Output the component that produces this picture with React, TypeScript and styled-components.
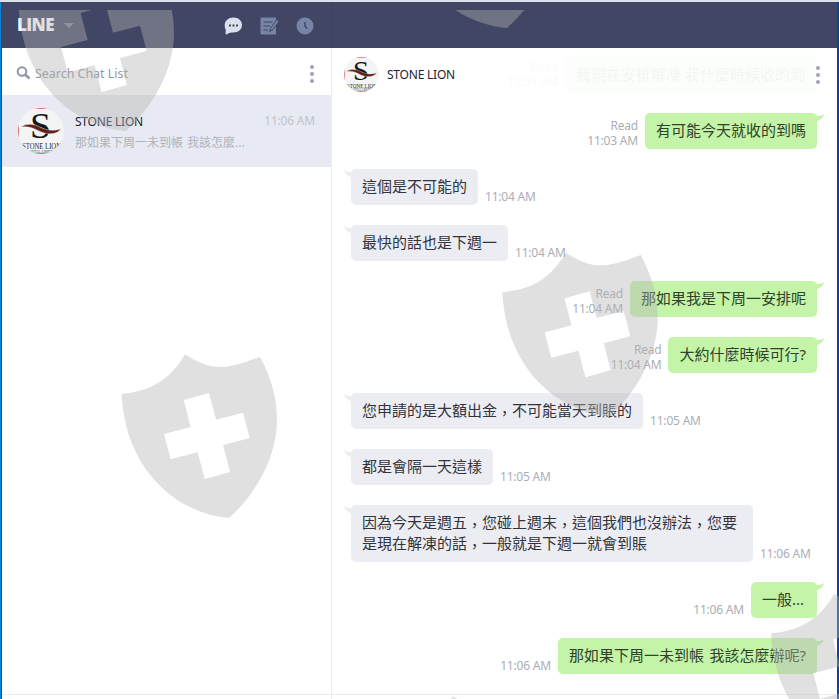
import React from "react";
import styled, { createGlobalStyle } from "styled-components";

const Global = createGlobalStyle`
  * { box-sizing: border-box; }
  html, body, #root { margin: 0; height: 100%; }
  body { overflow: hidden; background: #fff; font-family: "Noto Sans", "Noto Sans CJK TC", sans-serif; }
`;

const Desktop = styled.div`
  position: relative;
  width: 839px;
  height: 699px;
  overflow: hidden;
  display: flex;
  flex-direction: column;
  border-top: 2px solid #dbe2ec;
`;
const Main = styled.div`
  flex: 1;
  min-height: 0;
  display: grid;
  grid-template-columns: 1px 1px 330px 505px 2px;
`;
const Edge = styled.div<{ $color: string }>`
  background: ${(p) => p.$color};
`;
const Sidebar = styled.aside`
  display: flex;
  flex-direction: column;
  border-right: 1px solid #ebecef;
  background: #fff;
`;
const SideBar = styled.header`
  height: 46px;
  margin-right: -1px;
  flex: none;
  display: flex;
  align-items: center;
  padding: 0 17px 0 15px;
  background: #404663;
  border-right: 1px solid #3c415e;
`;
const Brand = styled.span`
  font: 800 17px/20px "Open Sans", sans-serif;
  letter-spacing: -0.6px;
  color: #fff;
  width: 37px;
`;
const Caret = styled.i`
  margin: 0 auto 0 10px;
  border: 5px solid transparent;
  border-top-color: #7a7e92;
  border-bottom: 0;
`;
const Icons = styled.div`
  display: flex;
  align-items: center;
  gap: 17px;
  padding-top: 1px;
  svg { display: block; }
`;
const SearchRow = styled.div`
  height: 47px;
  flex: none;
  display: flex;
  align-items: center;
  padding: 4px 17px 0 14px;
`;
const SearchText = styled.span`
  flex: 1;
  margin-left: 4px;
  font: 12.5px/16px "Noto Sans", sans-serif;
  letter-spacing: -0.04px;
  color: #93979f;
  white-space: nowrap;
`;
const Dots = styled.div`
  display: flex;
  flex-direction: column;
  gap: 3px;
  i { width: 4px; height: 4px; border-radius: 2px; background: #9da3b4; }
`;
const ChatItem = styled.div`
  height: 72px;
  flex: none;
  display: grid;
  grid-template-columns: 46px 1fr auto;
  column-gap: 11px;
  align-items: start;
  padding: 13px 16px 0;
  background: #e7eaf2;
`;
const ChatText = styled.div`
  padding-top: 6px;
`;
const Name = styled.div`
  font: 12px/16px "Noto Sans", sans-serif;
  letter-spacing: -0.22px;
  color: #20232f;
  white-space: nowrap;
`;
const Preview = styled.div`
  margin-top: 4px;
  font: 12px/18px "Noto Sans", "Noto Sans CJK TC", sans-serif;
  color: #b0b3bb;
  word-spacing: 1px;
  white-space: nowrap;
`;
const ItemTime = styled.div`
  padding-top: 5px;
  font: 12px/16px "Noto Sans", sans-serif;
  letter-spacing: -0.2px;
  color: #c0c3ca;
`;
const Filler = styled.div`
  flex: 1;
`;
const Footer = styled.div`
  height: 5px;
  flex: none;
  border-top: 1px solid #ebecef;
`;
const Pane = styled.main`
  display: flex;
  flex-direction: column;
  background: #fff;
  min-height: 0;
`;
const PaneBar = styled.div`
  height: 46px;
  flex: none;
  background: #404663;
`;
const PaneHead = styled.div`
  height: 53px;
  flex: none;
  display: flex;
  align-items: center;
  padding: 0 17px 0 12px;
  ${Name} { margin: 0 0 0 8px; }
`;
const Ghost = styled.div`
  flex: 1;
  display: flex;
  justify-content: flex-end;
  align-items: center;
  gap: 7px;
  opacity: 0.05;
`;
const Thread = styled.div`
  flex: 1;
  min-height: 0;
  display: flex;
  flex-direction: column;
  gap: 20px;
  padding: 12px 20px 0 19px;
`;
const Message = styled.div<{ $mine?: boolean }>`
  display: flex;
  flex: none;
  flex-direction: ${(p) => (p.$mine ? "row-reverse" : "row")};
  align-items: flex-end;
  gap: 7px;
`;
const Bubble = styled.div<{ $mine?: boolean }>`
  position: relative;
  max-width: 402px;
  min-width: 66px;
  padding: 7px 11px 8px;
  border-radius: 5px;
  background: ${(p) => (p.$mine ? "#c3f4a8" : "#ecedf3")};
  color: ${(p) => (p.$mine ? "#30422a" : "#32333b")};
  font: 15px/21px "Noto Sans", "Noto Sans CJK TC", sans-serif;
  white-space: pre-wrap;
`;
const SpacedText = styled.span`
  word-spacing: 1.7px;
`;
const Comma = styled.span`
  line-height: 0;
  vertical-align: -3px;
`;
const Tail = styled.svg<{ $mine?: boolean }>`
  position: absolute;
  top: 1px;
  ${(p) => (p.$mine ? "right: -7px;" : "left: -7px; transform: scaleX(-1);")}
`;
const Meta = styled.div<{ $mine?: boolean }>`
  flex: none;
  padding-bottom: 1px;
  font: 12px/15px "Noto Sans", sans-serif;
  letter-spacing: -0.2px;
  color: #abadb6;
  text-align: ${(p) => (p.$mine ? "right" : "left")};
  white-space: pre;
`;
const Overlay = styled.svg`
  position: absolute;
  left: 0;
  top: -2px;
  pointer-events: none;
`;

const Avatar = ({ size }: { size: number }) => (
  <svg width={size} height={size} viewBox="0 0 46 46">
    <defs>
      <clipPath id={`a${size}`}><circle cx="23" cy="23" r="23" /></clipPath>
    </defs>
    <g clipPath={`url(#a${size})`}>
      <rect width="46" height="46" fill="#f5f4f4" />
      <path d="M0 0H46V1H0zM0 45H46V46H0zM0 0H1V46H0z" fill="#cf6a6a" />
      <text x="22.5" y="30" textAnchor="middle" fontFamily="Liberation Serif" fontSize="36" textLength="21" lengthAdjust="spacingAndGlyphs" fill="#151515">S</text>
      <path d="M3 19C9 15 16 16 22 19C30 23 36 23 43 21C38 27 29 27 21 23C14 19 9 18 3 19Z" fill="#5f1f15" stroke="#f5f4f4" strokeWidth="0.4" />
      <text x="23.5" y="40.500" textAnchor="middle" fontFamily="Liberation Serif" fontSize="7.5" textLength="39" lengthAdjust="spacingAndGlyphs" fill="#222">STONE LION</text>
      <text x="23" y="44.500" textAnchor="middle" fontFamily="Liberation Serif" fontSize="4.5" textLength="29" lengthAdjust="spacingAndGlyphs" fill="#444">CAPITAL LIMITED</text>
    </g>
  </svg>
);

const Menu = () => (
  <Dots><i /><i /><i /></Dots>
);

const SHIELD =
  "M35 162C125 153 180 120 225 43C305 95 345 90 450 50C485 115 501 175 501 245C499 350 440 460 357 534C195 520 45 385 35 162ZM221 180L242 261L162 282L182 358L263 337L284 417L360 396L339 315L419 294L399 218L318 239L297 159Z";
const SHIELDS = [
  [7, -47], [388, -150], [110, 340], [490.7, 238.3], [759.3, 579.3], [378, 682],
];

type Msg = { text: string; time: string; mine?: boolean };
const MESSAGES: Msg[] = [
  { text: "有可能今天就收的到嗎", time: "Read\n11:03 AM", mine: true },
  { text: "這個是不可能的", time: "11:04 AM" },
  { text: "最快的話也是下週一", time: "11:04 AM" },
  { text: "那如果我是下周一安排呢", time: "Read\n11:04 AM", mine: true },
  { text: "大約什麼時候可行?", time: "Read\n11:04 AM", mine: true },
  { text: "您申請的是大額出金，不可能當天到賬的", time: "11:05 AM" },
  { text: "都是會隔一天這樣", time: "11:05 AM" },
  { text: "因為今天是週五，您碰上週末，這個我們也沒辦法，您要是現在解凍的話，一般就是下週一就會到賬", time: "11:06 AM" },
  { text: "一般...", time: "11:06 AM", mine: true },
  { text: "那如果下周一未到帳 我該怎麼辦呢?", time: "11:06 AM", mine: true },
];

const MessageText = ({ text }: { text: string }) => (
  <SpacedText>
    {text.split("，").map((part, i) => (
      <React.Fragment key={i}>
        {i > 0 && <Comma>，</Comma>}
        {part}
      </React.Fragment>
    ))}
  </SpacedText>
);

const BubbleTail = ({ mine }: { mine?: boolean }) => (
  <Tail $mine={mine} width="10" height="8" viewBox="0 0 10 8">
    <path d="M0 1C5 3 7 2 10 0C9 4 6 7 2 7L0 7Z" fill={mine ? "#c3f4a8" : "#ecedf3"} />
  </Tail>
);

export default function App() {
  return (
    <Desktop>
      <Global />
      <Main>
        <Edge $color="#0a84d8" />
        <Edge $color="#07569c" />
        <Sidebar>
          <SideBar>
            <Brand>LINE</Brand>
            <Caret />
            <Icons>
              <svg width="19" height="18" viewBox="0 0 19 18">
                <path d="M9.500 0.500C14.500 0.500 18 3.700 18 8S14.500 15.500 9.500 15.500C7 15.500 5 15.500 3 17.500L1.500 17L1.800 13C1 11.500 0.700 10 0.700 8C0.700 3.700 4.500 0.500 9.500 0.500Z" fill="#dbe0ed" />
                <path d="M5 7.500h2v2H5zM8.500 7.500h2v2h-2zM12 7.500h2v2h-2z" fill="#404663" />
              </svg>
              <svg width="19" height="18" viewBox="0 0 19 18">
                <path d="M0.500 0.500H16V17.500H0.500Z" fill="#7884a6" />
                <path d="M3.500 5H12.500M3.500 9H10M3.500 13H8" stroke="#404663" strokeWidth="1.200" />
                <path d="M9.500 14.500L11 10.500L17 2.500L19 4.500L13 12.500Z" fill="#7884a6" stroke="#404663" />
              </svg>
              <svg width="18" height="18" viewBox="0 0 18 18">
                <circle cx="9" cy="9" r="8.500" fill="#7884a6" />
                <path d="M9 5V9.500L11.500 11.500" fill="none" stroke="#404663" strokeWidth="1.500" />
              </svg>
            </Icons>
          </SideBar>
          <SearchRow>
            <svg width="15" height="15" viewBox="0 0 15 15" fill="none" stroke="#8f95a8">
              <circle cx="6" cy="5.500" r="4.300" strokeWidth="2" />
              <path d="M9 8.500L13.500 12.500" strokeWidth="2.400" />
            </svg>
            <SearchText>Search Chat List</SearchText>
            <Menu />
          </SearchRow>
          <ChatItem>
            <Avatar size={46} />
            <ChatText>
              <Name>STONE LION</Name>
              <Preview>那如果下周一未到帳 我該怎麼...</Preview>
            </ChatText>
            <ItemTime>11:06 AM</ItemTime>
          </ChatItem>
          <Filler />
          <Footer />
        </Sidebar>
        <Pane>
          <PaneBar />
          <PaneHead>
            <Avatar size={35} />
            <Name>STONE LION</Name>
            <Ghost>
              <Meta $mine>{"Read\n11:03 AM"}</Meta>
              <Bubble $mine>我現在安排解凍 我什麼時候收的到</Bubble>
            </Ghost>
            <Menu />
          </PaneHead>
          <Thread>
            {MESSAGES.map((m, i) => (
              <Message key={i} $mine={m.mine}>
                <Bubble $mine={m.mine}>
                  <MessageText text={m.text} />
                  <BubbleTail mine={m.mine} />
                </Bubble>
                <Meta $mine={m.mine}>{m.time}</Meta>
              </Message>
            ))}
          </Thread>
          <Footer />
        </Pane>
        <Edge $color="#0b4596" />
      </Main>
      <Overlay width="839" height="699">
        <clipPath id="below"><rect y="10" width="839" height="689" /></clipPath>
        <g clipPath="url(#below)" fill="#b3b3b3" fillOpacity="0.41" fillRule="evenodd">
          {SHIELDS.map(([x, y]) => (
            <path key={x} d={SHIELD} transform={`translate(${x} ${y}) scale(0.33333)`} />
          ))}
        </g>
      </Overlay>
    </Desktop>
  );
}
